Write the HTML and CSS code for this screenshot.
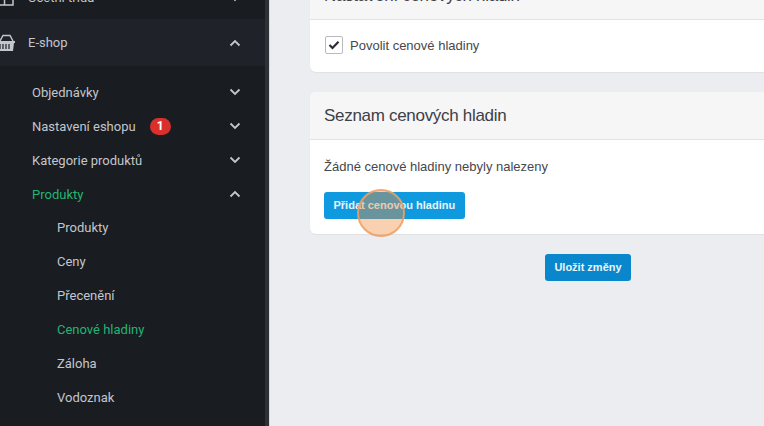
FILE: index.html
```html
<!DOCTYPE html>
<html lang="cs">
<head>
  <meta charset="UTF-8">
  <title>Cenové hladiny</title>
  <link rel="stylesheet" href="styles.css">
</head>
<body>

  <!-- Sidebar -->
  <aside class="sidebar">
    <div class="nav-top">
      <svg class="nav-icon" width="20" height="16" viewBox="0 0 20 16"><path d="M1 1h17v14H1zM1 8h17M9.500 1v14" fill="none" stroke="#c3c6cc" stroke-width="1.500"/></svg>
      <span class="nav-top-label">Účetní třída</span>
      <svg class="chev" width="12" height="8" viewBox="0 0 12 8"><path d="M1.500 1.500 6 6l4.500-4.500"/></svg>
    </div>
    <div class="nav-top nav-top-open">
      <svg class="nav-icon" width="20" height="18" viewBox="0 0 20 18"><path d="M5 7 8 1.500h7l3 5.500" fill="none" stroke="#c3c6cc" stroke-width="1.500"/><path d="M0 7h20v2h-1l-1 8H2L1 9H0z" fill="#c3c6cc"/><path d="M5 10v5M8 10v5M11 10v5M14 10v5" stroke="#1f2329" stroke-width="1.200"/></svg>
      <span class="nav-top-label">E-shop</span>
      <svg class="chev" width="12" height="8" viewBox="0 0 12 8"><path d="M1.500 6.500 6 2l4.500 4.500"/></svg>
    </div>
    <ul class="subnav">
      <li class="sub-item"><span>Objednávky</span><svg class="chev" width="12" height="8" viewBox="0 0 12 8"><path d="M1.500 1.500 6 6l4.500-4.500"/></svg></li>
      <li class="sub-item"><span>Nastavení eshopu</span><b class="badge">1</b><svg class="chev" width="12" height="8" viewBox="0 0 12 8"><path d="M1.500 1.500 6 6l4.500-4.500"/></svg></li>
      <li class="sub-item"><span>Kategorie produktů</span><svg class="chev" width="12" height="8" viewBox="0 0 12 8"><path d="M1.500 1.500 6 6l4.500-4.500"/></svg></li>
      <li class="sub-item active"><span>Produkty</span><svg class="chev" width="12" height="8" viewBox="0 0 12 8"><path d="M1.500 6.500 6 2l4.500 4.500"/></svg></li>
      <li class="sub-item deep"><span>Produkty</span></li>
      <li class="sub-item deep"><span>Ceny</span></li>
      <li class="sub-item deep"><span>Přecenění</span></li>
      <li class="sub-item deep active"><span>Cenové hladiny</span></li>
      <li class="sub-item deep"><span>Záloha</span></li>
      <li class="sub-item deep"><span>Vodoznak</span></li>
      <li class="sub-item deep dim"><span>Import</span></li>
    </ul>
  </aside>

  <!-- Obsah -->
  <main class="content">
    <section class="card">
      <h2 class="card-head">Nastavení cenových hladin</h2>
      <div class="card-body card-body-check">
        <span class="checkbox"><svg width="12" height="10" viewBox="0 0 12 10"><path d="M1.500 5 4.500 8 10.500 1.800" fill="none" stroke="#2b2d33" stroke-width="2.200"/></svg></span>
        <span class="text">Povolit cenové hladiny</span>
      </div>
    </section>

    <section class="card">
      <h2 class="card-head">Seznam cenových hladin</h2>
      <div class="card-body">
        <p class="text empty">Žádné cenové hladiny nebyly nalezeny</p>
        <a class="btn" href="#">Přidat cenovou hladinu</a>
      </div>
    </section>

    <div class="save-row">
      <a class="btn btn-save" href="#">Uložit změny</a>
    </div>
  </main>

  <div class="click-mark"></div>

</body>
</html>
```

FILE: styles.css
```css
* { margin: 0; padding: 0; box-sizing: border-box; }
body {
  width: 764px;
  height: 426px;
  overflow: hidden;
  display: flex;
  position: relative;
  background: #ebedf1;
  font-family: 'Liberation Sans', Arial, sans-serif;
}

/* Sidebar */
.sidebar {
  width: 270px;
  flex: none;
  height: 426px;
  overflow: hidden;
  background: #191c21;
  border-right: 1px solid #d6d8dc;
  box-shadow: inset -4px 0 0 #2e3136;
  font-family: 'Roboto', sans-serif;
  font-size: 13px;
  color: #c3c6cc;
}
.nav-top {
  display: flex;
  align-items: center;
  height: 47px;
  padding-right: 28px;
}
.nav-top:first-child {
  margin-top: -28px;
  padding-top: 4px;
}
.nav-top-open {
  background: #1f2329;
  margin-right: 4px;
  padding-right: 24px;
}
.nav-icon {
  flex: none;
  margin-left: -5px;
  margin-right: 13px;
}
.nav-top-label { flex: 1; }
.chev {
  flex: none;
  margin-left: auto;
  fill: none;
  stroke: #c3c6cc;
  stroke-width: 1.800;
}
.subnav {
  list-style: none;
  padding: 9.400px 0 0 32px;
}
.sub-item {
  display: flex;
  align-items: center;
  height: 33.900px;
  padding-right: 28px;
}
.sub-item.deep { padding-left: 25px; }
.sub-item.active { color: #22b573; }
.sub-item.dim { color: #6a6d72; }
.badge {
  width: 21px;
  height: 17px;
  margin-left: 14px;
  border-radius: 9px;
  background: #d9302c;
  color: #fff;
  font-size: 12px;
  line-height: 17px;
  text-align: center;
}

/* Obsah */
.content {
  flex: none;
  width: 494px;
  padding: 0 0 0 40px;
  margin-top: -28px;
}
.card {
  width: 480px;
  background: #fff;
  border-radius: 6px;
  margin-bottom: 20px;
  box-shadow: 0 1px 1px rgba(0, 0, 0, 0.05);
  overflow: hidden;
}
.card-head {
  height: 48px;
  padding-left: 14px;
  background: #f6f6f7;
  border-bottom: 1px solid #e2e3e6;
  font-size: 17px;
  font-weight: 400;
  letter-spacing: -0.300px;
  line-height: 48px;
  color: #3e4046;
}
.card-body { padding: 17px 14px 15px; }
.card-body-check {
  display: flex;
  align-items: center;
  gap: 7px;
  height: 52px;
  padding-top: 0;
  padding-bottom: 2px;
  padding-left: 15px;
}
.text {
  font-size: 13px;
  color: #46484d;
}
.empty {
  line-height: 20px;
  margin-bottom: 15px;
}
.checkbox {
  width: 18px;
  height: 18px;
  display: flex;
  align-items: center;
  justify-content: center;
  background: #fff;
  border: 1px solid #b8babf;
  border-radius: 2px;
}
.btn {
  display: inline-block;
  height: 27px;
  padding: 0 9.500px;
  background: #0f9ae0;
  border-radius: 3px;
  font-size: 11px;
  font-weight: bold;
  line-height: 27px;
  color: #e9f5fb;
  text-decoration: none;
}
.save-row {
  width: 556px;
  text-align: center;
}
.btn-save { background: #0a87cc; }
.click-mark {
  position: absolute;
  left: 357px;
  top: 189px;
  width: 48px;
  height: 48px;
  border-radius: 50%;
  background: rgba(240, 140, 60, 0.4);
  border: 2px solid rgba(240, 160, 100, 0.85);
}
```
